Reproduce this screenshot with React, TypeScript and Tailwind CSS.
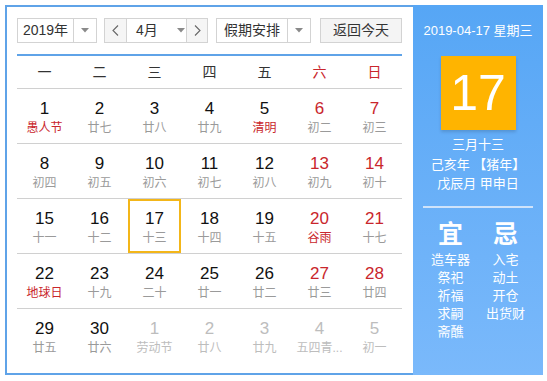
import React from "react";

type Cell = { d: number; l: string; hol?: boolean; we?: boolean; faded?: boolean; sel?: boolean };

const rows: Cell[][] = [
  [
    { d: 1, l: "愚人节", hol: true },
    { d: 2, l: "廿七" },
    { d: 3, l: "廿八" },
    { d: 4, l: "廿九" },
    { d: 5, l: "清明", hol: true },
    { d: 6, l: "初二", we: true },
    { d: 7, l: "初三", we: true },
  ],
  [
    { d: 8, l: "初四" },
    { d: 9, l: "初五" },
    { d: 10, l: "初六" },
    { d: 11, l: "初七" },
    { d: 12, l: "初八" },
    { d: 13, l: "初九", we: true },
    { d: 14, l: "初十", we: true },
  ],
  [
    { d: 15, l: "十一" },
    { d: 16, l: "十二" },
    { d: 17, l: "十三", sel: true },
    { d: 18, l: "十四" },
    { d: 19, l: "十五" },
    { d: 20, l: "谷雨", we: true, hol: true },
    { d: 21, l: "十七", we: true },
  ],
  [
    { d: 22, l: "地球日", hol: true },
    { d: 23, l: "十九" },
    { d: 24, l: "二十" },
    { d: 25, l: "廿一" },
    { d: 26, l: "廿二" },
    { d: 27, l: "廿三", we: true },
    { d: 28, l: "廿四", we: true },
  ],
  [
    { d: 29, l: "廿五" },
    { d: 30, l: "廿六" },
    { d: 1, l: "劳动节", faded: true },
    { d: 2, l: "廿八", faded: true },
    { d: 3, l: "廿九", faded: true },
    { d: 4, l: "五四青...", faded: true },
    { d: 5, l: "初一", faded: true },
  ],
];

const Tri = () => (
  <svg width="8" height="5" viewBox="0 0 8 5">
    <path d="M0 0 L8 0 L4 4.5 Z" fill="#8a8a8a" />
  </svg>
);

const Chev = ({ dir }: { dir: "l" | "r" }) => (
  <svg width="7" height="11" viewBox="0 0 7 11">
    <path
      d={dir === "l" ? "M6 0.5 L1 5.5 L6 10.5" : "M1 0.5 L6 5.5 L1 10.5"}
      fill="none"
      stroke="#666"
      strokeWidth="1.1"
    />
  </svg>
);

const week = ["一", "二", "三", "四", "五", "六", "日"];

export default function App() {
  return (
    <div className="font-['Liberation_Sans','Noto_Sans_CJK_SC',sans-serif] bg-white w-[547px] h-[381px] p-[5px]">
      <div className="flex h-[370px] w-[538px]">
        {/* Left */}
        <div className="w-[408px] h-[370px] border-y-2 border-l-2 border-[#5fa3e8] pl-[10px] pt-[11px]">
          <div className="flex h-[25px] w-[385px] text-[14px] text-[#333] whitespace-nowrap">
            <div className="flex w-[80px] h-[25px] border border-[#d3d3d3]">
              <div className="w-[55px] flex items-center justify-center">2019年</div>
              <div className="flex-1 border-l border-[#d3d3d3] flex items-center justify-center">
                <Tri />
              </div>
            </div>
            <div className="ml-[7px] flex w-[104px] h-[25px] border border-[#d3d3d3]">
              <div className="w-[22px] shrink-0 bg-[#f5f5f5] border-r border-[#d3d3d3] flex items-center justify-center">
                <Chev dir="l" />
              </div>
              <div className="flex-1 flex items-center pl-[9px]">
                <span>4月</span>
                <span className="ml-[19px] flex">
                  <Tri />
                </span>
              </div>
              <div className="w-[21px] shrink-0 bg-[#f5f5f5] border-l border-[#d3d3d3] flex items-center justify-center">
                <Chev dir="r" />
              </div>
            </div>
            <div className="ml-[8px] flex w-[95px] h-[25px] border border-[#d3d3d3]">
              <div className="w-[70px] flex items-center justify-center">假期安排</div>
              <div className="flex-1 border-l border-[#d3d3d3] flex items-center justify-center">
                <Tri />
              </div>
            </div>
            <div className="ml-[9px] w-[82px] h-[25px] bg-[#f4f4f4] border border-[#d3d3d3] flex items-center justify-center">
              返回今天
            </div>
          </div>
          <div className="mt-[11px] w-[385px] h-[2px] bg-[#5fa3e8]" />
          <div className="grid grid-cols-7 w-[385px] h-[32px] text-[14px]">
            {week.map((w, i) => (
              <div
                key={w}
                className={
                  "flex items-center justify-center " + (i >= 5 ? "text-[#c9262c]" : "text-[#333]")
                }
              >
                {w}
              </div>
            ))}
          </div>
          <div className="w-[385px]">
            {rows.map((r, ri) => (
              <div key={ri} className="grid grid-cols-7 h-[55px] border-t border-[#d0d0d0]">
                {r.map((c, ci) => {
                  const numColor = c.faded ? "text-[#bdbdbd]" : c.we ? "text-[#c9262c]" : "text-[#111]";
                  const lColor = c.faded ? "text-[#bdbdbd]" : c.hol ? "text-[#c9262c]" : "text-[#9a9a9a]";
                  return (
                    <div key={ci} className="flex justify-center">
                      <div
                        className={
                          "flex flex-col items-center " +
                          (c.sel
                            ? "w-[53px] h-[54px] border-2 border-[#f3b619] pt-[8px]"
                            : "w-[53px] pt-[10px]")
                        }
                      >
                        <div className={"text-[17px] leading-[20px] " + numColor}>{c.d}</div>
                        <div className={"text-[12px] leading-[18px] whitespace-nowrap " + lColor}>
                          {c.l}
                        </div>
                      </div>
                    </div>
                  );
                })}
              </div>
            ))}
          </div>
        </div>
        {/* Right */}
        <div className="w-[130px] h-[370px] bg-gradient-to-b from-[#56a6f5] to-[#7ab9fb] flex flex-col items-center text-white">
          <div className="mt-[17px] text-[13px] leading-[18px]">2019-04-17 星期三</div>
          <div className="mt-[16px] w-[75px] h-[74px] bg-[#ffb400] shadow-[0_2px_3px_rgba(0,0,0,0.15)] flex items-center justify-center text-[50px] leading-none">
            17
          </div>
          <div className="mt-[5px] text-[13px] leading-[19.5px] text-center">
            <div>三月十三</div>
            <div>己亥年 【猪年】</div>
            <div>戊辰月 甲申日</div>
          </div>
          <div className="mt-[12px] w-[110px] h-[2px] bg-[#cfe3fa]" />
          <div className="mt-[10px] flex w-[110px]">
            <div className="w-[55px] flex flex-col items-center">
              <div className="text-[25px] leading-[32px] font-bold">宜</div>
              <div className="mt-[1px] text-[13px] leading-[18px] flex flex-col items-center">
                <div>造车器</div>
                <div>祭祀</div>
                <div>祈福</div>
                <div>求嗣</div>
                <div>斋醮</div>
              </div>
            </div>
            <div className="w-[55px] flex flex-col items-center">
              <div className="text-[25px] leading-[32px] font-bold">忌</div>
              <div className="mt-[1px] text-[13px] leading-[18px] flex flex-col items-center">
                <div>入宅</div>
                <div>动土</div>
                <div>开仓</div>
                <div>出货财</div>
              </div>
            </div>
          </div>
        </div>
      </div>
    </div>
  );
}
